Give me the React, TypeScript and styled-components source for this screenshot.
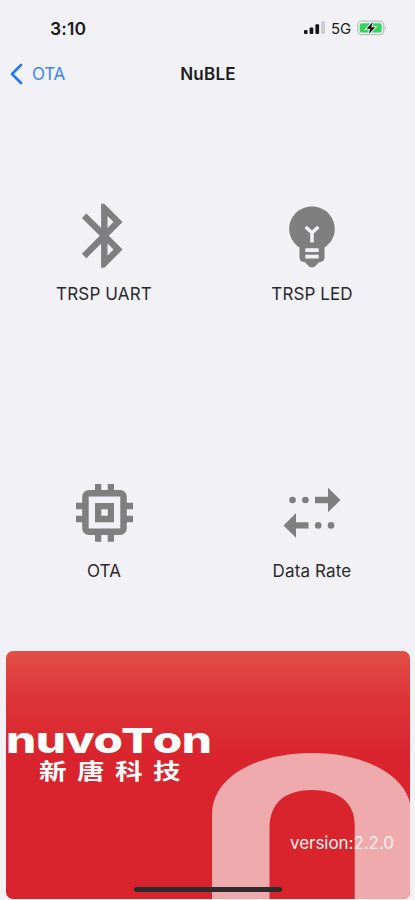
import React from "react";
import styled, { createGlobalStyle } from "styled-components";

const GlobalStyle = createGlobalStyle`
  * { box-sizing: border-box; }
  html, body { margin: 0; background: #f1f1f6; }
  body { font-family: Inter, "Liberation Sans", sans-serif; color: #1c1c1e; }
`;

const Screen = styled.div`
  width: 415px;
  height: 900px;
  overflow: hidden;
  display: flex;
  flex-direction: column;
  background: #f1f1f6;
`;

const StatusBar = styled.header`
  height: 56px;
  padding: 0 28px 0 50px;
  display: flex;
  align-items: center;
  justify-content: space-between;
`;

const Time = styled.span`
  font-size: 17.5px;
  font-weight: 600;
  margin-top: 1px;
  letter-spacing: 0.15px;
`;

const Indicators = styled.div`
  display: flex;
  align-items: center;
  svg { display: block; }
`;

const Network = styled.span`
  font-size: 15px;
  font-weight: 400;
  margin: 1px 6px 0 6px;
  letter-spacing: -0.2px;
`;

const NavBar = styled.nav`
  height: 41px;
  padding: 0 9px 5px 10px;
  display: grid;
  grid-template-columns: 1fr auto 1fr;
  align-items: center;
`;

const BackButton = styled.button`
  border: 0;
  padding: 0;
  background: none;
  display: flex;
  align-items: center;
  gap: 9px;
  color: #3c86f6;
  font: 400 17px/22px Inter, sans-serif;
  letter-spacing: -0.3px;
`;

const Title = styled.h1`
  margin: 0;
  font-size: 17px;
  line-height: 22px;
  font-weight: 600;
  letter-spacing: 0.25px;
`;

const Menu = styled.main`
  display: grid;
  grid-template-columns: 208px 208px;
  grid-template-rows: 277px 277px;
`;

const Tile = styled.button`
  border: 0;
  background: none;
  padding: 103px 0 0;
  display: flex;
  flex-direction: column;
  align-items: center;
  font: inherit;
  color: #29292b;
`;

const Glyph = styled.svg`
  display: block;
  width: 72px;
  height: 72px;
  fill: #7f7f80;
`;

const Label = styled.span<{ $tracking: number }>`
  margin-top: 11px;
  font-size: 17px;
  line-height: 22px;
  white-space: nowrap;
  letter-spacing: ${(p) => p.$tracking}px;
`;

const Card = styled.section`
  position: relative;
  flex: none;
  width: 404px;
  height: 248px;
  margin-left: 6px;
  border-radius: 7px;
  overflow: hidden;
  background: linear-gradient(#e24e47 0, #dd3437 50px, #d9242e 105px, #d9242e 100%);
`;

const Arch = styled.svg`
  position: absolute;
  inset: 0;
`;

const Brand = styled.div`
  position: relative;
  width: 206px;
  padding-top: 70px;
  color: #fff;
`;

const Wordmark = styled.div`
  height: 38px;
  font: 800 36px/38px Inter, sans-serif;
  white-space: nowrap;
  letter-spacing: -0.3px;
  transform: scaleX(1.32);
  transform-origin: 0 0;
`;

const SmallCap = styled.span`
  display: inline-block;
  font-size: 34px;
  transform: scaleX(1.08);
`;

const Company = styled.div`
  margin-left: 33px;
  font: 700 21.5px/22px "Noto Sans CJK TC", sans-serif;
  letter-spacing: 8.2px;
  white-space: nowrap;
  transform: scaleX(1.28);
  transform-origin: 0 0;
`;

const Version = styled.div`
  position: absolute;
  right: 16px;
  top: 181px;
  font-size: 17px;
  line-height: 22px;
  letter-spacing: -0.05px;
  color: #fff0ee;
`;

const HomeIndicator = styled.div`
  position: absolute;
  left: 128px;
  top: 235.5px;
  width: 148px;
  height: 5px;
  border-radius: 3px;
  background: #2d2b2c;
`;

const BluetoothIcon = () => (
  <Glyph viewBox="0 0 72 72">
    <path
      transform="translate(-2.1 -2.6) scale(3.2)"
      d="M17.71 7.71L12 2h-1v7.59L6.41 5 5 6.41 10.59 12 5 17.59 6.41 19 11 14.41V22h1l5.71-5.71-4.3-4.29 4.3-4.29zM13 5.83l1.88 1.88L13 9.59V5.83zm1.88 10.46L13 18.17v-3.76l1.88 1.88z"
    />
  </Glyph>
);

const BulbIcon = () => (
  <Glyph viewBox="0 0 72 72">
    <path d="M36 6.500C23.300 6.500 13.200 16.500 13.200 29C13.200 37 17.500 43.500 23.500 47.500V57.500Q23.500 61.200 27.500 62L29 62.300C31 64.500 33.500 67.500 36 67.500S41 64.500 43 62.300L44.500 62Q48.500 61.200 48.500 57.500V47.500C54.500 43.500 58.800 37 58.800 29C58.800 16.500 48.700 6.500 36 6.500Z" />
    <path d="M29.700 27L36 32.700L42.300 27M36 32V42.500" fill="none" stroke="#f1f1f6" strokeWidth="3.500" />
    <path d="M29.300 48.200h13.400v3.800h-13.400zM29.300 54.700h13.400v3.800h-13.400z" fill="#f1f1f6" />
  </Glyph>
);

const ChipIcon = () => (
  <Glyph viewBox="0 0 72 72" fillRule="evenodd">
    <path d="M20.700 13h31.600a6.500 6.500 0 0 1 6.500 6.500v32a6.500 6.500 0 0 1-6.500 6.500h-31.600a6.500 6.500 0 0 1-6.500-6.500v-32a6.500 6.500 0 0 1 6.500-6.500zM20.700 19.500v32h31.600v-32z" />
    <path d="M27 26h19v19.200H27zM33.300 32.300v6.500h6.500v-6.500z" />
    <path d="M27 7h6.300v7H27zM39.700 7H46v7h-6.300zM27 57h6.300v7.700H27zM39.700 57H46v7.700h-6.300zM8 25.800h7v6.400H8zM8 38.700h7v6.500H8zM58 25.800h7v6.400h-7zM58 38.700h7v6.500h-7z" />
  </Glyph>
);

const TransferIcon = () => (
  <Glyph viewBox="0 0 72 72">
    <circle cx="16.500" cy="23" r="3.300" />
    <circle cx="29.400" cy="23" r="3.300" />
    <path d="M39 19.700h13V10.700L64.500 23L52 35.300V26.300H39zM32.500 45.200H20V36L7.500 48.400L20 60.800V51.600H32.500z" />
    <circle cx="42.200" cy="48.400" r="3.300" />
    <circle cx="55" cy="48.400" r="3.300" />
  </Glyph>
);

const tiles = [
  { label: "TRSP UART", tracking: 0.15, Icon: BluetoothIcon },
  { label: "TRSP LED", tracking: 0.1, Icon: BulbIcon },
  { label: "OTA", tracking: 0, Icon: ChipIcon },
  { label: "Data Rate", tracking: 0.15, Icon: TransferIcon },
];

export default function App() {
  return (
    <Screen>
      <GlobalStyle />
      <StatusBar>
        <Time>3:10</Time>
        <Indicators>
          <svg width="21" height="14" viewBox="0 0 21 14">
            <g fill="#151517">
              <rect x="0" y="9" width="3.500" height="4" rx="1" />
              <rect x="5.600" y="6.500" width="3.700" height="6.500" rx="1" />
              <rect x="11.400" y="3.300" width="3.700" height="9.700" rx="1" />
            </g>
            <rect x="17.200" y="0.500" width="3.700" height="12.500" rx="1" fill="#cbcbd0" />
          </svg>
          <Network>5G</Network>
          <svg width="30" height="16" viewBox="0 0 30 16">
            <rect x="0.700" y="1.200" width="26" height="13.400" rx="4" fill="#f1f1f6" stroke="#bcc2bf" strokeWidth="1.300" />
            <path d="M28 5.700q1.700 2.200 0 4.400z" fill="#aaa" />
            <rect x="2.700" y="3.200" width="22" height="9.400" rx="2.200" fill="#35d45c" />
            <path d="M15.800 2L9.500 8.700h3.700L11.800 14L18.200 7.200h-3.900z" fill="#111" stroke="#f1f1f6" strokeWidth="2" paintOrder="stroke" />
          </svg>
        </Indicators>
      </StatusBar>
      <NavBar>
        <BackButton>
          <svg width="13" height="22" viewBox="0 0 13 22">
            <path d="M11 2L2 11L11 20" fill="none" stroke="#1f78f5" strokeWidth="2.600" strokeLinecap="round" strokeLinejoin="round" />
          </svg>
          OTA
        </BackButton>
        <Title>NuBLE</Title>
      </NavBar>
      <Menu>
        {tiles.map(({ label, tracking, Icon }) => (
          <Tile key={label}>
            <Icon />
            <Label $tracking={tracking}>{label}</Label>
          </Tile>
        ))}
      </Menu>
      <Card>
        <Arch width="404" height="248" viewBox="6 651 404 248">
          <path
            fill="#efaaae"
            d="M212 899V815C212 776 258 753 312 753C362 753 403 773 410 803V899H354.700V825C354.700 801 337 790 312 790S269.500 801 269.500 829V899Z"
          />
        </Arch>
        <Brand>
          <Wordmark>nuvo<SmallCap>T</SmallCap>on</Wordmark>
          <Company lang="zh-Hant">新唐科技</Company>
        </Brand>
        <Version>version:2.2.0</Version>
        <HomeIndicator />
      </Card>
    </Screen>
  );
}
